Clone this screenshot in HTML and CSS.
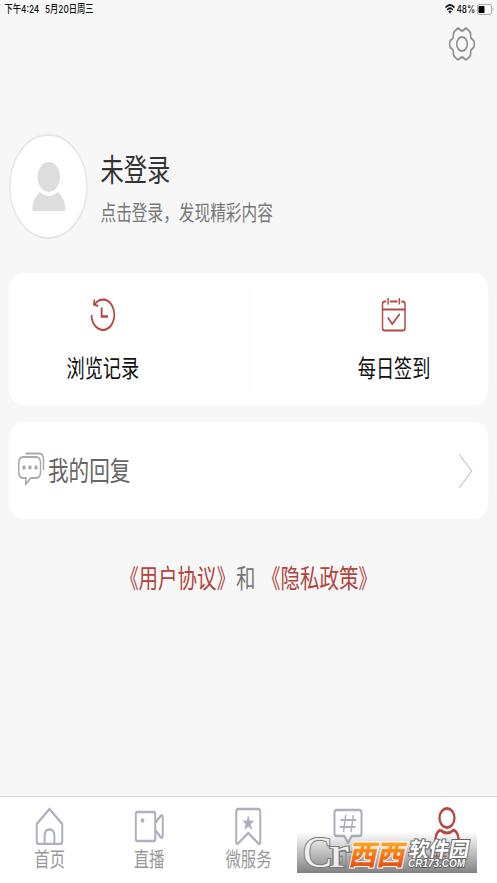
FILE: index.html
```html
<!DOCTYPE html>
<html lang="zh-CN">
<head>
<meta charset="utf-8">
<title>我的</title>
<link rel="stylesheet" href="styles.css">
</head>
<body>
<div class="viewport">
<div class="screen">
  <header class="status">
    <span class="time">下午4:24</span><span class="date">5月20日周三</span>
    <span class="spacer"></span>
    <svg class="wifi" width="14" height="10" viewBox="0 0 14 10"><path d="M1 3.5Q7-1.5 13 3.5M3.2 5.8Q7 2.7 10.8 5.8" fill="none" stroke="#111" stroke-width="1.7"/><path d="M4.8 7.2Q7 5.7 9.2 7.2L7 9.7Z" fill="#111"/></svg>
    <span class="percent">48%</span>
    <svg class="battery" width="23" height="11" viewBox="0 0 23 11"><rect x=".6" y=".6" width="18.8" height="9.8" rx="2.5" fill="#fff" stroke="#999"/><rect x="2" y="2" width="8" height="7" rx="1" fill="#000"/><path d="M21 3.7Q23 5.5 21 7.3Z" fill="#999"/></svg>
  </header>
  <div class="toolbar">
    <svg width="36" height="34" viewBox="0 0 36 34" fill="none" stroke="#929292" stroke-width="2.2" stroke-linejoin="round"><path d="M10.500 2.500Q13 .5 15 2.500Q18 5 21 2.500Q23 .5 25.500 2.500L28 4.500Q30 6 29.500 9Q29.500 11.500 32 12.500Q34.500 13.500 34.500 16V18Q34.500 20.500 32 21.500Q29.500 22.500 29.500 25Q30 28 28 29.500L25.500 31.500Q23 33.500 21 31.500Q18 29 15 31.500Q13 33.500 10.500 31.500L8 29.500Q6 28 6.500 25Q6.500 22.500 4 21.500Q1.500 20.500 1.500 18V16Q1.500 13.500 4 12.500Q6.500 11.500 6.500 9Q6 6 8 4.500Z"/><circle cx="18" cy="17" r="7"/></svg>
  </div>
  <section class="profile">
    <div class="avatar"><svg width="46" height="50" viewBox="0 0 46 50" fill="#ddd"><ellipse cx="23" cy="15" rx="15" ry="15"/><path d="M11 30Q23 38 35 30Q45 36 45 48Q45 49 43 49H3Q1 49 1 47Q2 36 11 30Z"/></svg></div>
    <div class="identity"><h1>未登录</h1><p>点击登录，发现精彩内容</p></div>
  </section>
  <section class="card shortcuts">
    <a class="shortcut">
      <svg width="34" height="34" viewBox="0 0 34 34" fill="none" stroke="#b34b3e" stroke-width="2.300"><path d="M2 17A15.200 15.200 0 1 0 6.500 6"/><path d="M6 1.500L5 6.500L11 8" stroke-width="2"/><path d="M15.500 9.500V18.500H24" stroke-width="2.500"/></svg>
      <span>浏览记录</span>
    </a>
    <i class="divider"></i>
    <a class="shortcut">
      <svg width="34" height="34" viewBox="0 0 34 34" fill="none" stroke="#b34b3e" stroke-width="2"><path d="M7 3.500H5Q2 3.500 2 6V30Q2 32.500 5 32.500H29Q32 32.500 32 30V6Q32 3.500 29 3.500H27M12 3.500H22M2 11.500H32M9.500 0V6.500M24.500 0V6.500"/><path d="M9 19.500L15 26L25 16"/></svg>
      <span>每日签到</span>
    </a>
  </section>
  <a class="card replies">
    <svg width="36" height="34" viewBox="0 0 36 34" fill="none" stroke="#aaa" stroke-width="2"><path d="M7 5H24Q30 5 30 11V20Q30 26 24 26H17L10.500 32V26H7Q1 26 1 20V11Q1 5 7 5Z"/><path d="M10 1.500H28Q34 1.500 34 8V18"/><g fill="#aaa" stroke="none"><circle cx="8" cy="15.500" r="2.200"/><circle cx="16" cy="15.500" r="2.200"/><circle cx="24" cy="15.500" r="2.200"/></g></svg>
    <span>我的回复</span>
    <svg class="chevron" width="20" height="36" viewBox="0 0 20 36" fill="none" stroke="#ccc" stroke-width="1.500"><path d="M1 1L18 18L1 35"/></svg>
  </a>
  <p class="terms"><a><b class="open">《</b>用户协议<b class="close">》</b></a><span>和</span><a><b class="open">《</b>隐私政策<b class="close">》</b></a></p>
  <nav class="tabs">
    <a><svg width="40" height="38" viewBox="0 0 40 38"><path d="M20 2L37 17V34Q37 37 34 37H6Q3 37 3 34V17ZM13.500 37V29Q13.500 22.500 20 22.500Q26.500 22.500 26.500 29V37"/></svg><span>首页</span></a>
    <a><svg width="40" height="38" viewBox="0 0 40 38"><rect x="2" y="5" width="26" height="29" rx="2"/><path d="M28 16L35 9Q38 7 38 11V28Q38 32 35 30L28 23"/><ellipse cx="11" cy="13.500" rx="1.800" ry="2" fill="#aeb0c0" stroke-width="1"/></svg><span>直播</span></a>
    <a><svg width="40" height="38" viewBox="0 0 40 38"><path d="M7 2H33Q36 2 36 5V35Q36 38 33 36L20 26L7 36Q4 38 4 35V5Q4 2 7 2Z"/><path d="M20 8L22 13.500H28L23.500 17L25 23L20 19.500L15 23L16.500 17L12 13.500H18Z" fill="#aeb0c0" stroke="none"/></svg><span>微服务</span></a>
    <a><svg width="40" height="38" viewBox="0 0 40 38"><path d="M5 3H35Q38 3 38 6V26Q38 29 35 29H25L20 36L15 29H5Q2 29 2 26V6Q2 3 5 3Z"/><path d="M17 8L14 25M27 8L24 25M10 13H31M9 20H30" stroke-width="2"/></svg><span>问政</span></a>
    <a class="active"><svg width="40" height="38" viewBox="0 0 40 38"><ellipse cx="20" cy="11" rx="10" ry="9.500"/><path d="M11 23Q20 29 29 23Q36 25 36 38M11 23Q4 25 4 38"/></svg><span>我的</span></a>
  </nav>
</div>
</div>
<div class="watermark">
  <svg width="180" height="41" viewBox="0 0 180 41">
    <g class="mark-logo"><text x="6" y="35" font-size="44" textLength="29" lengthAdjust="spacingAndGlyphs">C</text><text x="32" y="35" font-size="44" textLength="20" lengthAdjust="spacingAndGlyphs">r</text></g>
    <defs><linearGradient id="orange" x1="0" y1="0" x2="0" y2="1"><stop offset="0.2" stop-color="#ffae20"/><stop offset="1" stop-color="#e5380d"/></linearGradient></defs>
    <text class="mark-brand" x="0" y="0" transform="translate(51 33) skewX(-12)" textLength="56" lengthAdjust="spacingAndGlyphs">西西</text>
    <text class="mark-name" x="0" y="0" transform="translate(111 24.500) skewX(-10)" textLength="60" lengthAdjust="spacingAndGlyphs">软件园</text>
    <text class="mark-url" x="111" y="35" textLength="57" lengthAdjust="spacingAndGlyphs">CR173.COM</text>
  </svg>
</div>
</body>
</html>
```
FILE: styles.css
```css
* { box-sizing: border-box; }
html, body { margin: 0; height: 883px; overflow: hidden; }
body { position: relative; width: 497px; background: #f7f7f7; font-family: "Noto Sans CJK SC", sans-serif; }
h1, p { margin: 0; font-weight: 400; }
svg { display: block; flex: none; }

/* Layout is 4:3 tablet width, condensed horizontally to the window. */
.viewport { width: 497px; height: 883px; overflow: clip; }
.screen {
  display: flex; flex-direction: column;
  width: 662.667px; height: 883px;
  transform: scaleX(.75); transform-origin: 0 0;
  color: #333; white-space: nowrap;
}
.status { display: flex; align-items: center; height: 18px; padding: 0 4px 0 6px; font: 500 11px/18px Inter, "Noto Sans CJK SC", sans-serif; color: #111; }
.time { width: 54px; }
.spacer { flex: 1; }
.percent { margin: 0 2px; }
.toolbar { display: flex; justify-content: flex-end; height: 116px; padding: 9px 29px 0 0; }
.profile { display: flex; height: 139px; padding-left: 12px; }
.avatar { display: flex; align-items: center; justify-content: center; width: 105px; height: 105px; border: 2px solid #e6e6e6; border-radius: 50%; background: #fff; }
.identity { padding: 12px 0 0 17px; }
.identity h1 { font-size: 31px; line-height: 44px; }
.identity p { margin-top: 6px; font-size: 20.900px; line-height: 30px; color: #777; }
.card { flex: none; display: flex; margin: 0 12px; border-radius: 18px; background: #fff; }
.shortcuts { height: 132px; }
.shortcut { flex: 1; display: flex; flex-direction: column; align-items: center; padding-top: 25px; font-size: 24.300px; line-height: 34px; color: #111; }
.shortcut:first-child { padding-right: 71px; }
.shortcut:last-child { padding-left: 66px; }
.shortcut span { margin-top: 18px; }
.divider { width: 1px; margin: 15px 0; background: #f3f3f3; }
.replies { align-items: center; height: 97px; margin-top: 17px; padding: 0 20px 4px 12px; font-size: 27.500px; line-height: 40px; color: #666; }
.replies span { margin-left: 4px; }
.replies .chevron { margin-left: auto; margin-top: 4px; }
.terms { display: flex; justify-content: center; margin-top: 39px; font-size: 26px; line-height: 38px; color: #b0443a; }
.terms b { display: inline-block; font-weight: 400; transform: scaleX(.92); }
.terms .open { transform-origin: 100% 50%; }
.terms .close { transform-origin: 0 50%; }
.terms span { margin-right: 7px; color: #777; }
.tabs { display: flex; height: 87px; margin-top: auto; border-top: 1px solid #d8d8d8; background: #fff; }
.tabs a { flex: 1; display: flex; flex-direction: column; align-items: center; padding-top: 10px; font-size: 20.500px; line-height: 26px; color: #999; }
.tabs svg { fill: none; stroke: #aeb0c0; stroke-width: 2.700; stroke-linejoin: round; }
.tabs .active { color: #b0443a; }
.tabs .active svg { stroke: #b9463c; stroke-width: 3; }

.watermark { position: absolute; left: 297px; top: 832px; width: 180px; height: 41px; background: linear-gradient(rgba(110,110,110,0), rgba(125,125,125,.97)); }
.mark-logo { font-family: "Liberation Serif", serif; fill: #eee; stroke: #777; stroke-width: 2; paint-order: stroke; }
.mark-brand { font-size: 28px; font-weight: 900; fill: url(#orange); stroke: #fff; stroke-width: 2; paint-order: stroke; }
.mark-name { font-size: 21px; font-weight: 700; fill: #fff; stroke: #666; stroke-width: 2; paint-order: stroke; }
.mark-url { font: italic 700 11px "Liberation Sans", sans-serif; fill: #fff; stroke: #555; stroke-width: 1.500; paint-order: stroke; }
```
